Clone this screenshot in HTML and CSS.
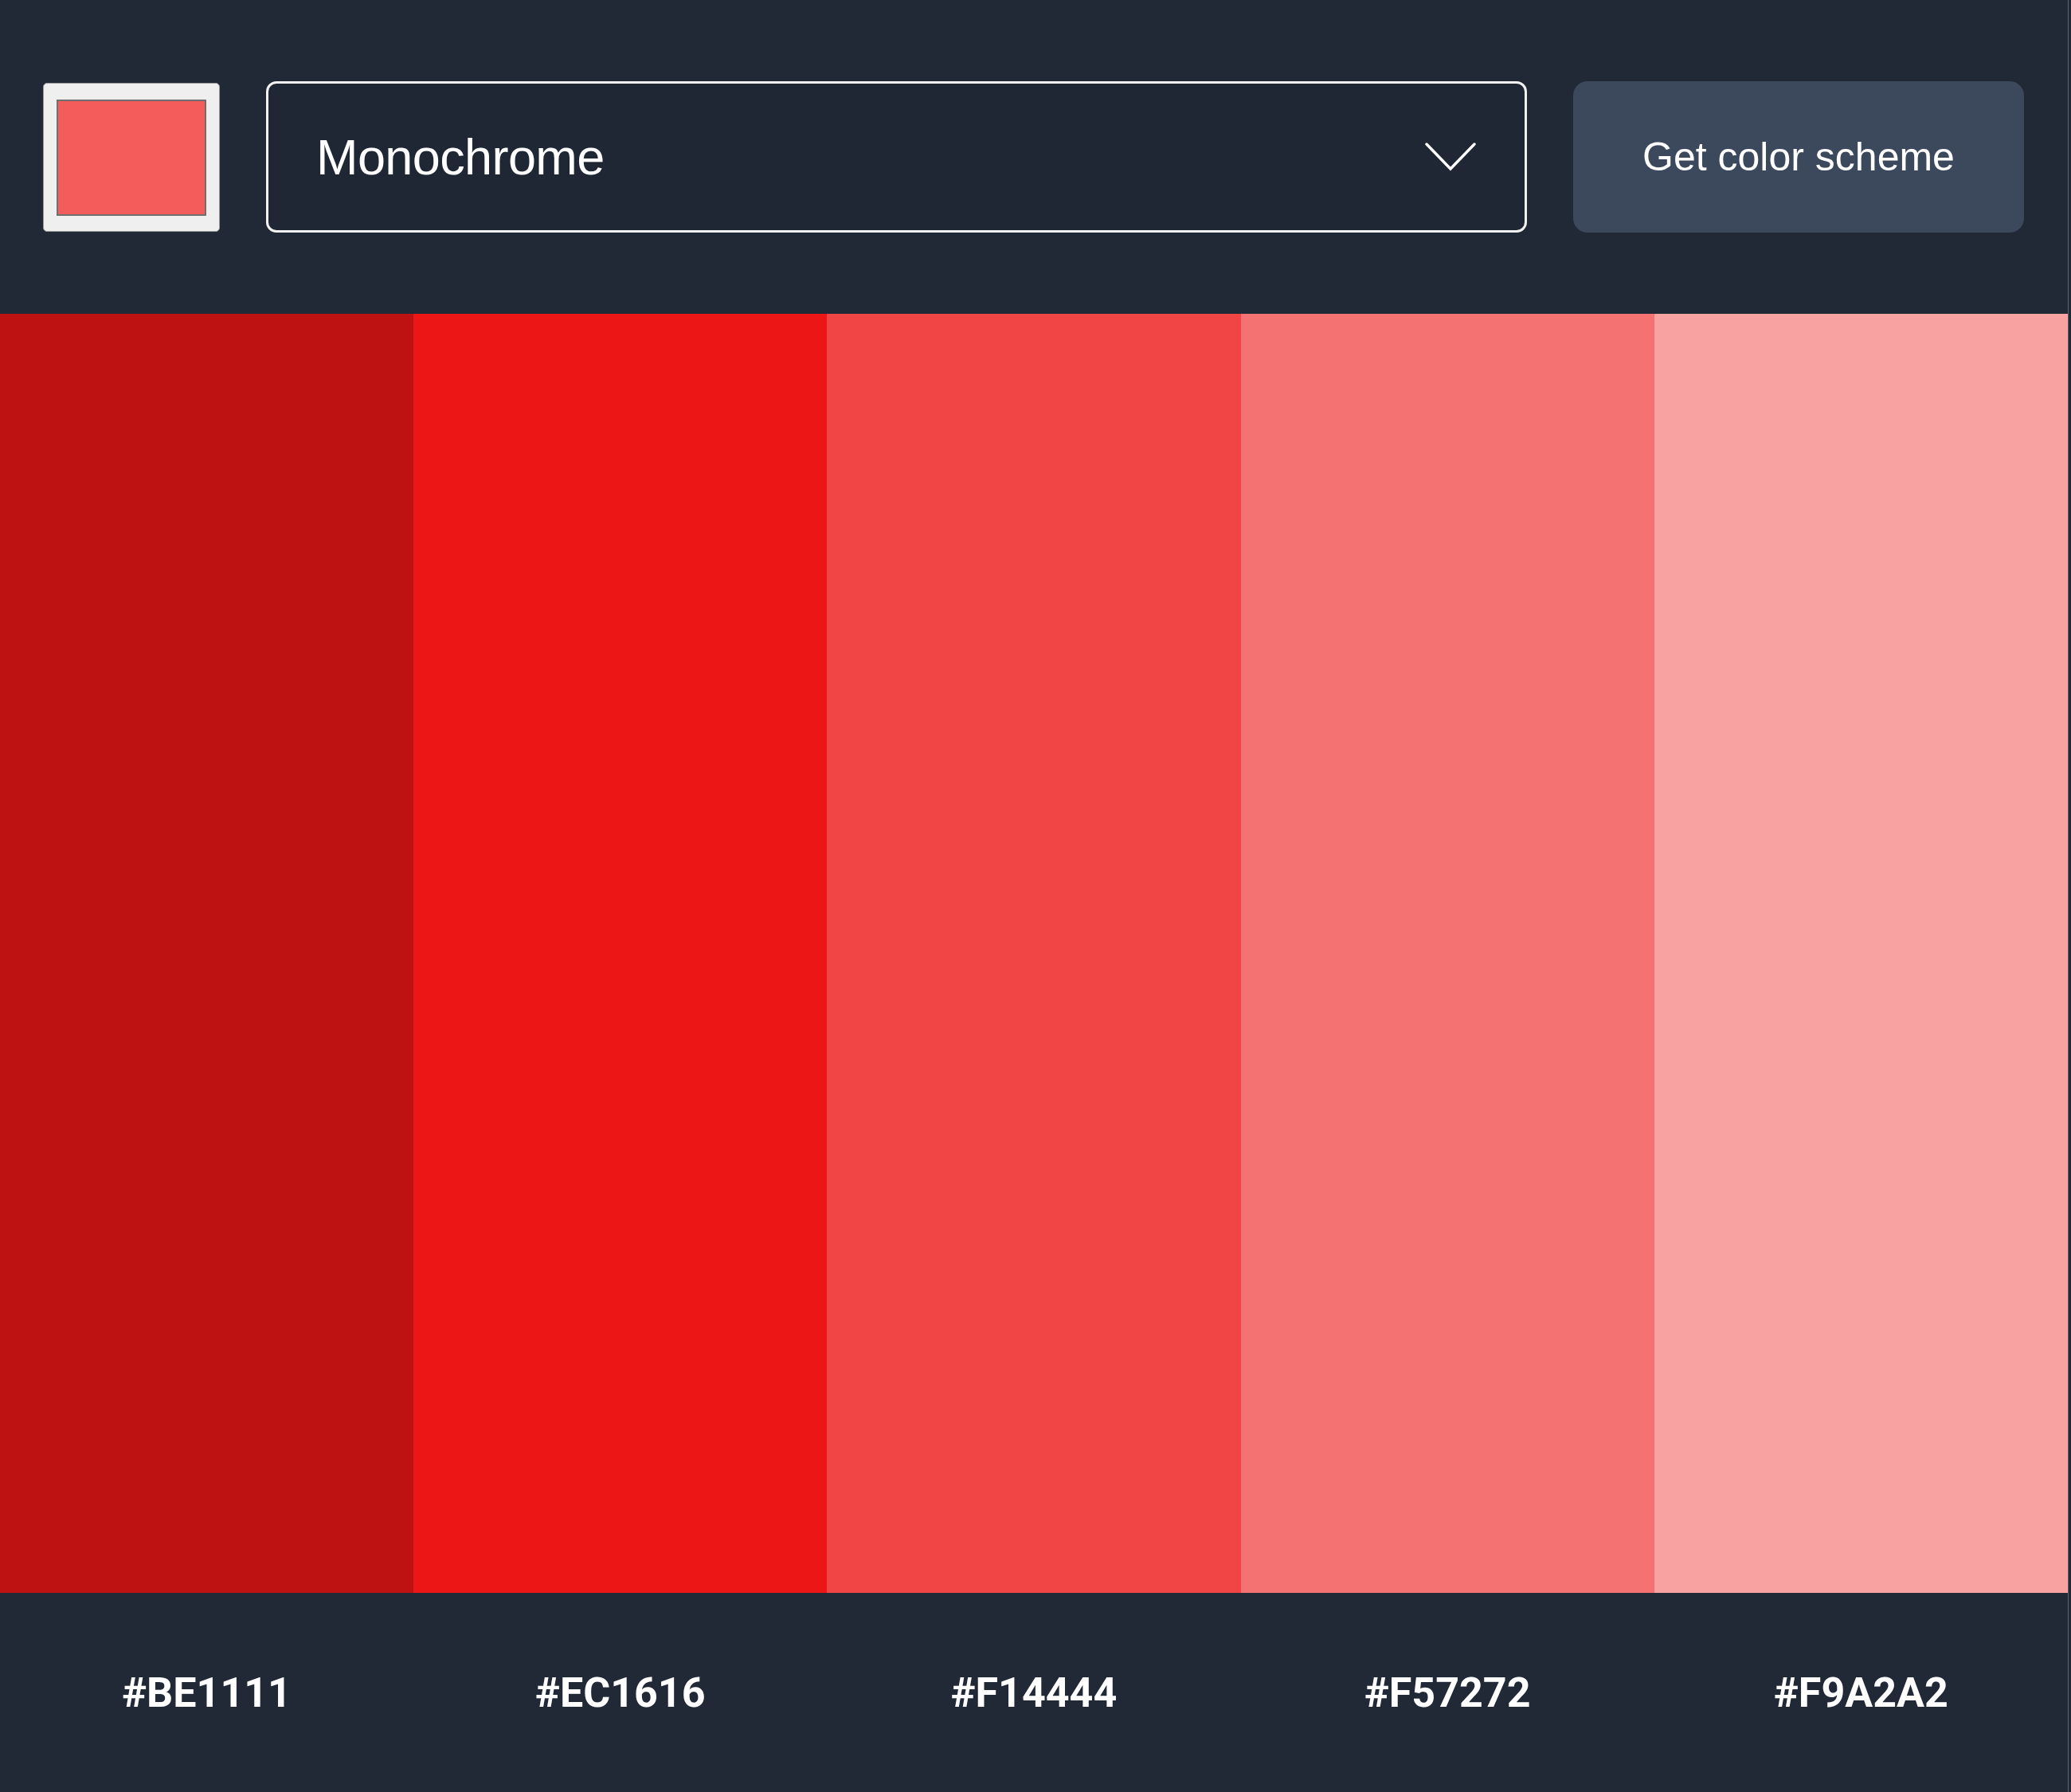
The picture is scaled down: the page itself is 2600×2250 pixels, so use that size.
FILE: index.html
```html
<!DOCTYPE html>
<html lang="en">
<head>
<meta charset="utf-8">
<title>Color Scheme Generator</title>
<link rel="stylesheet" href="styles.css">
</head>
<body>
<div class="app">
  <header class="controls">
    <div class="swatch"><div class="swatch-fill"></div></div>
    <div class="select">
      <span class="select-value">Monochrome</span>
      <svg class="chevron" width="64" height="36" viewBox="0 0 64 36" aria-hidden="true">
        <polyline points="2,2 32,33 62,2" fill="none" stroke="#ffffff" stroke-width="3.4" stroke-linecap="round" stroke-linejoin="miter"/>
      </svg>
    </div>
    <button class="get-btn" type="button">Get color scheme</button>
  </header>
  <main class="palette">
    <div class="col c1"></div>
    <div class="col c2"></div>
    <div class="col c3"></div>
    <div class="col c4"></div>
    <div class="col c5"></div>
  </main>
  <footer class="labels">
    <span class="label">#BE1111</span>
    <span class="label">#EC1616</span>
    <span class="label">#F14444</span>
    <span class="label">#F57272</span>
    <span class="label">#F9A2A2</span>
  </footer>
</div>
</body>
</html>
```
FILE: styles.css
```css
html, body {
  margin: 0;
  padding: 0;
  background: #212836;
}

.app {
  width: 2596px;
  border-right: 1px solid #5d636e;
  background: #212836;
  font-family: "Liberation Sans", Arial, sans-serif;
}

.controls {
  display: flex;
  align-items: center;
  gap: 58px;
  padding: 102px 55px 102px 54px;
}

.swatch {
  flex: 0 0 auto;
  width: 222px;
  height: 187px;
  box-sizing: border-box;
  padding: 20px 16px 19px 16px;
  background: #efefef;
  border: 1px solid #9a9a9a;
  border-radius: 5px;
}

.swatch-fill {
  width: 100%;
  height: 100%;
  box-sizing: border-box;
  background: #f45b5b;
  border: 2px solid #6f6f6f;
}

.select {
  flex: 1 1 auto;
  height: 190px;
  box-sizing: border-box;
  display: flex;
  align-items: center;
  justify-content: space-between;
  padding: 0 61px 0 60px;
  border: 3px solid #f2f2f2;
  border-radius: 13px;
  background: #1f2634;
  color: #ffffff;
}

.select-value {
  font-size: 63px;
  line-height: 1;
  letter-spacing: -0.6px;
  color: #ffffff;
}

.chevron {
  display: block;
  flex: 0 0 auto;
}

.get-btn {
  flex: 0 0 auto;
  width: 566px;
  height: 190px;
  border: none;
  border-radius: 18px;
  background: #3c495d;
  color: #ffffff;
  font-family: "Liberation Sans", Arial, sans-serif;
  font-size: 50px;
  padding: 0;
}

.palette {
  display: flex;
  height: 1606px;
}

.col {
  flex: 1 1 0;
}

.c1 { background: #be1111; }
.c2 { background: #ec1616; }
.c3 { background: #f14444; }
.c4 { background: #f57272; }
.c5 { background: #f9a2a2; }

.labels {
  display: flex;
  height: 250px;
  align-items: center;
}

.label {
  flex: 1 1 0;
  text-align: center;
  font-family: Roboto, "Open Sans", sans-serif;
  font-weight: 700;
  font-size: 52px;
  color: #ffffff;
}
```
